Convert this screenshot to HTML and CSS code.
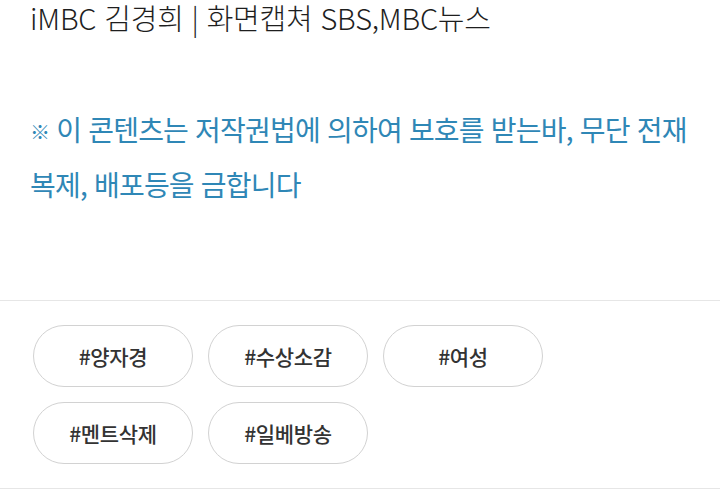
FILE: index.html
```html
<!DOCTYPE html>
<html lang="ko">
<head>
  <meta charset="UTF-8">
  <meta name="viewport" content="width=device-width, initial-scale=1.0">
  <title>기사</title>
  <link rel="stylesheet" href="styles.css">
</head>
<body>

  <div class="article">
    <p class="caption">iMBC 김경희 | 화면캡쳐 SBS,MBC뉴스</p>
    <p class="notice"><span class="mark">※</span> 이 콘텐츠는 저작권법에 의하여 보호를 받는바, 무단 전재 복제, 배포등을 금합니다</p>
  </div>

  <div class="tag-box">
    <ul class="tag-list">
      <li><a href="#" class="tag">#양자경</a></li>
      <li><a href="#" class="tag">#수상소감</a></li>
      <li><a href="#" class="tag">#여성</a></li>
      <li><a href="#" class="tag">#멘트삭제</a></li>
      <li><a href="#" class="tag">#일베방송</a></li>
    </ul>
  </div>

</body>
</html>
```

FILE: styles.css
```css
* {
  margin: 0;
  padding: 0;
  box-sizing: border-box;
}
body {
  font-family: "Noto Sans CJK KR", "Noto Sans", sans-serif;
  background-color: #fff;
  color: #222;
}
.article {
  padding: 0 30px;
  height: 301px;
  border-bottom: 1px solid #e6e6e6;
}
.caption {
  font-size: 29px;
  font-weight: 300;
  line-height: 34px;
  letter-spacing: -0.2px;
  color: #1e1e1e;
}
.notice {
  margin-top: 69px;
  font-size: 28px;
  line-height: 52px;
  letter-spacing: -0.8px;
  color: #2f87b6;
}
.mark {
  font-family: "Noto Sans CJK KR", sans-serif;
  font-size: 20px;
  font-weight: 900;
  vertical-align: 1px;
}
.tag-box {
  padding: 24px 33px 24px;
  border-bottom: 1px solid #e6e6e6;
}
.tag-list {
  list-style: none;
  display: flex;
  flex-wrap: wrap;
  gap: 15px 15px;
  width: 540px;
}
.tag {
  display: flex;
  align-items: center;
  justify-content: center;
  width: 160px;
  height: 62px;
  border: 1px solid #d2d2d2;
  border-radius: 31px;
  font-size: 21px;
  font-weight: 500;
  letter-spacing: -0.3px;
  color: #333;
  text-decoration: none;
}
```
